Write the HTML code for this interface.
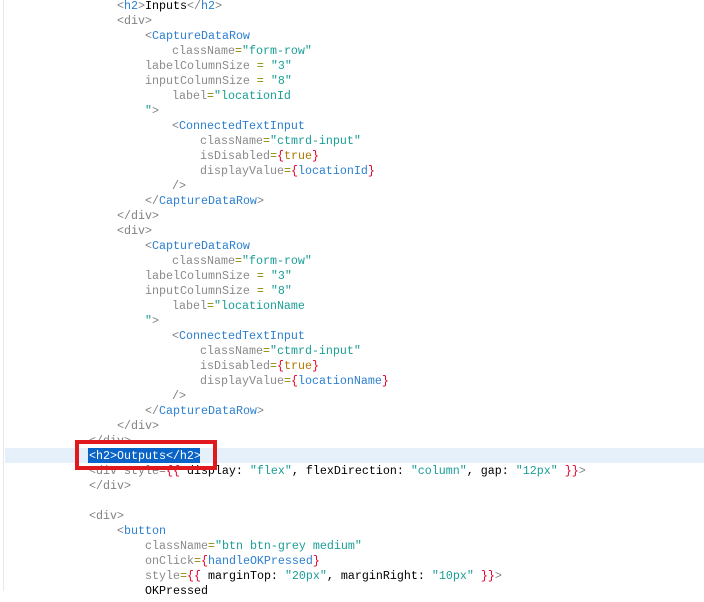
<!DOCTYPE html>
<html><head><meta charset="utf-8"><style>
body{margin:0;width:704px;height:591px;overflow:hidden;background:#fff;position:relative;font-family:"Liberation Mono",monospace;font-size:11.67px}
#w{position:absolute;left:0;top:2px;width:704px;height:600px}
.l{position:absolute;white-space:pre;line-height:15px;height:15px}
.b{color:#808080}.t{color:#2b7fd0}.a{color:#8a8a8a}.s{color:#1a9e96}.e{color:#8a8a00}.r{color:#e0002a}.k{color:#b07800}.v{color:#2b7fd0}.x{color:#000}
</style></head><body>
<div style="position:absolute;left:3px;top:0;width:1px;height:591px;background:#e8e8e8"></div>
<div style="position:absolute;left:5px;top:448px;width:699px;height:15px;background:#e6f0fa"></div>
<div style="position:absolute;left:88px;top:448px;width:112px;height:15px;background:#0a64c8"></div>
<div id="w">
<div class="l" style="left:117px;top:-3px"><span class="b">&lt;</span><span class="t">h2</span><span class="b">&gt;</span><span class="x">Inputs</span><span class="b">&lt;/</span><span class="t">h2</span><span class="b">&gt;</span></div>
<div class="l" style="left:117px;top:12px"><span class="b">&lt;div&gt;</span></div>
<div class="l" style="left:145px;top:27px"><span class="b">&lt;</span><span class="t">CaptureDataRow</span></div>
<div class="l" style="left:172px;top:42px"><span class="a">className</span><span class="e">=</span><span class="s">"form-row"</span></div>
<div class="l" style="left:145px;top:57px"><span class="a">labelColumnSize </span><span class="e">=</span><span class="s"> "3"</span></div>
<div class="l" style="left:145px;top:72px"><span class="a">inputColumnSize </span><span class="e">=</span><span class="s"> "8"</span></div>
<div class="l" style="left:172px;top:87px"><span class="a">label</span><span class="e">=</span><span class="s">"locationId</span></div>
<div class="l" style="left:145px;top:102px"><span class="s">"</span><span class="b">&gt;</span></div>
<div class="l" style="left:172px;top:117px"><span class="b">&lt;</span><span class="t">ConnectedTextInput</span></div>
<div class="l" style="left:200px;top:132px"><span class="a">className</span><span class="e">=</span><span class="s">"ctmrd-input"</span></div>
<div class="l" style="left:200px;top:147px"><span class="a">isDisabled</span><span class="e">=</span><span class="r">{</span><span class="k">true</span><span class="r">}</span></div>
<div class="l" style="left:200px;top:162px"><span class="a">displayValue</span><span class="e">=</span><span class="r">{</span><span class="v">locationId</span><span class="r">}</span></div>
<div class="l" style="left:172px;top:177px"><span class="b">/&gt;</span></div>
<div class="l" style="left:145px;top:192px"><span class="b">&lt;/</span><span class="t">CaptureDataRow</span><span class="b">&gt;</span></div>
<div class="l" style="left:117px;top:207px"><span class="b">&lt;/div&gt;</span></div>
<div class="l" style="left:117px;top:222px"><span class="b">&lt;div&gt;</span></div>
<div class="l" style="left:145px;top:237px"><span class="b">&lt;</span><span class="t">CaptureDataRow</span></div>
<div class="l" style="left:172px;top:252px"><span class="a">className</span><span class="e">=</span><span class="s">"form-row"</span></div>
<div class="l" style="left:145px;top:267px"><span class="a">labelColumnSize </span><span class="e">=</span><span class="s"> "3"</span></div>
<div class="l" style="left:145px;top:282px"><span class="a">inputColumnSize </span><span class="e">=</span><span class="s"> "8"</span></div>
<div class="l" style="left:172px;top:297px"><span class="a">label</span><span class="e">=</span><span class="s">"locationName</span></div>
<div class="l" style="left:145px;top:312px"><span class="s">"</span><span class="b">&gt;</span></div>
<div class="l" style="left:172px;top:327px"><span class="b">&lt;</span><span class="t">ConnectedTextInput</span></div>
<div class="l" style="left:200px;top:342px"><span class="a">className</span><span class="e">=</span><span class="s">"ctmrd-input"</span></div>
<div class="l" style="left:200px;top:357px"><span class="a">isDisabled</span><span class="e">=</span><span class="r">{</span><span class="k">true</span><span class="r">}</span></div>
<div class="l" style="left:200px;top:372px"><span class="a">displayValue</span><span class="e">=</span><span class="r">{</span><span class="v">locationName</span><span class="r">}</span></div>
<div class="l" style="left:172px;top:387px"><span class="b">/&gt;</span></div>
<div class="l" style="left:145px;top:402px"><span class="b">&lt;/</span><span class="t">CaptureDataRow</span><span class="b">&gt;</span></div>
<div class="l" style="left:117px;top:417px"><span class="b">&lt;/div&gt;</span></div>
<div class="l" style="left:89px;top:432px"><span class="b">&lt;/div&gt;</span></div>
<div class="l" style="left:89px;top:447px;color:#fff">&lt;h2&gt;Outputs&lt;/h2&gt;</div>
<div class="l" style="left:89px;top:462px"><span class="b">&lt;div style=</span><span class="r">{{</span><span class="x"> display: </span><span class="s">"flex"</span><span class="x">, flexDirection: </span><span class="s">"column"</span><span class="x">, gap: </span><span class="s">"12px"</span><span class="x"> </span><span class="r">}}</span><span class="b">&gt;</span></div>
<div class="l" style="left:89px;top:477px"><span class="b">&lt;/div&gt;</span></div>
<div class="l" style="left:89px;top:507px"><span class="b">&lt;div&gt;</span></div>
<div class="l" style="left:117px;top:522px"><span class="b">&lt;</span><span class="t">button</span></div>
<div class="l" style="left:145px;top:537px"><span class="a">className</span><span class="e">=</span><span class="s">"btn btn-grey medium"</span></div>
<div class="l" style="left:145px;top:552px"><span class="a">onClick</span><span class="e">=</span><span class="r">{</span><span class="v">handleOKPressed</span><span class="r">}</span></div>
<div class="l" style="left:145px;top:567px"><span class="a">style</span><span class="e">=</span><span class="r">{{</span><span class="x"> marginTop: </span><span class="s">"20px"</span><span class="x">, marginRight: </span><span class="s">"10px"</span><span class="x"> </span><span class="r">}}</span><span class="b">&gt;</span></div>
<div class="l" style="left:145px;top:582px"><span class="x">OKPressed</span></div>
</div>
<div style="position:absolute;left:75px;top:440px;width:134px;height:22px;border:4px solid #e0191e"></div>
</body></html>
